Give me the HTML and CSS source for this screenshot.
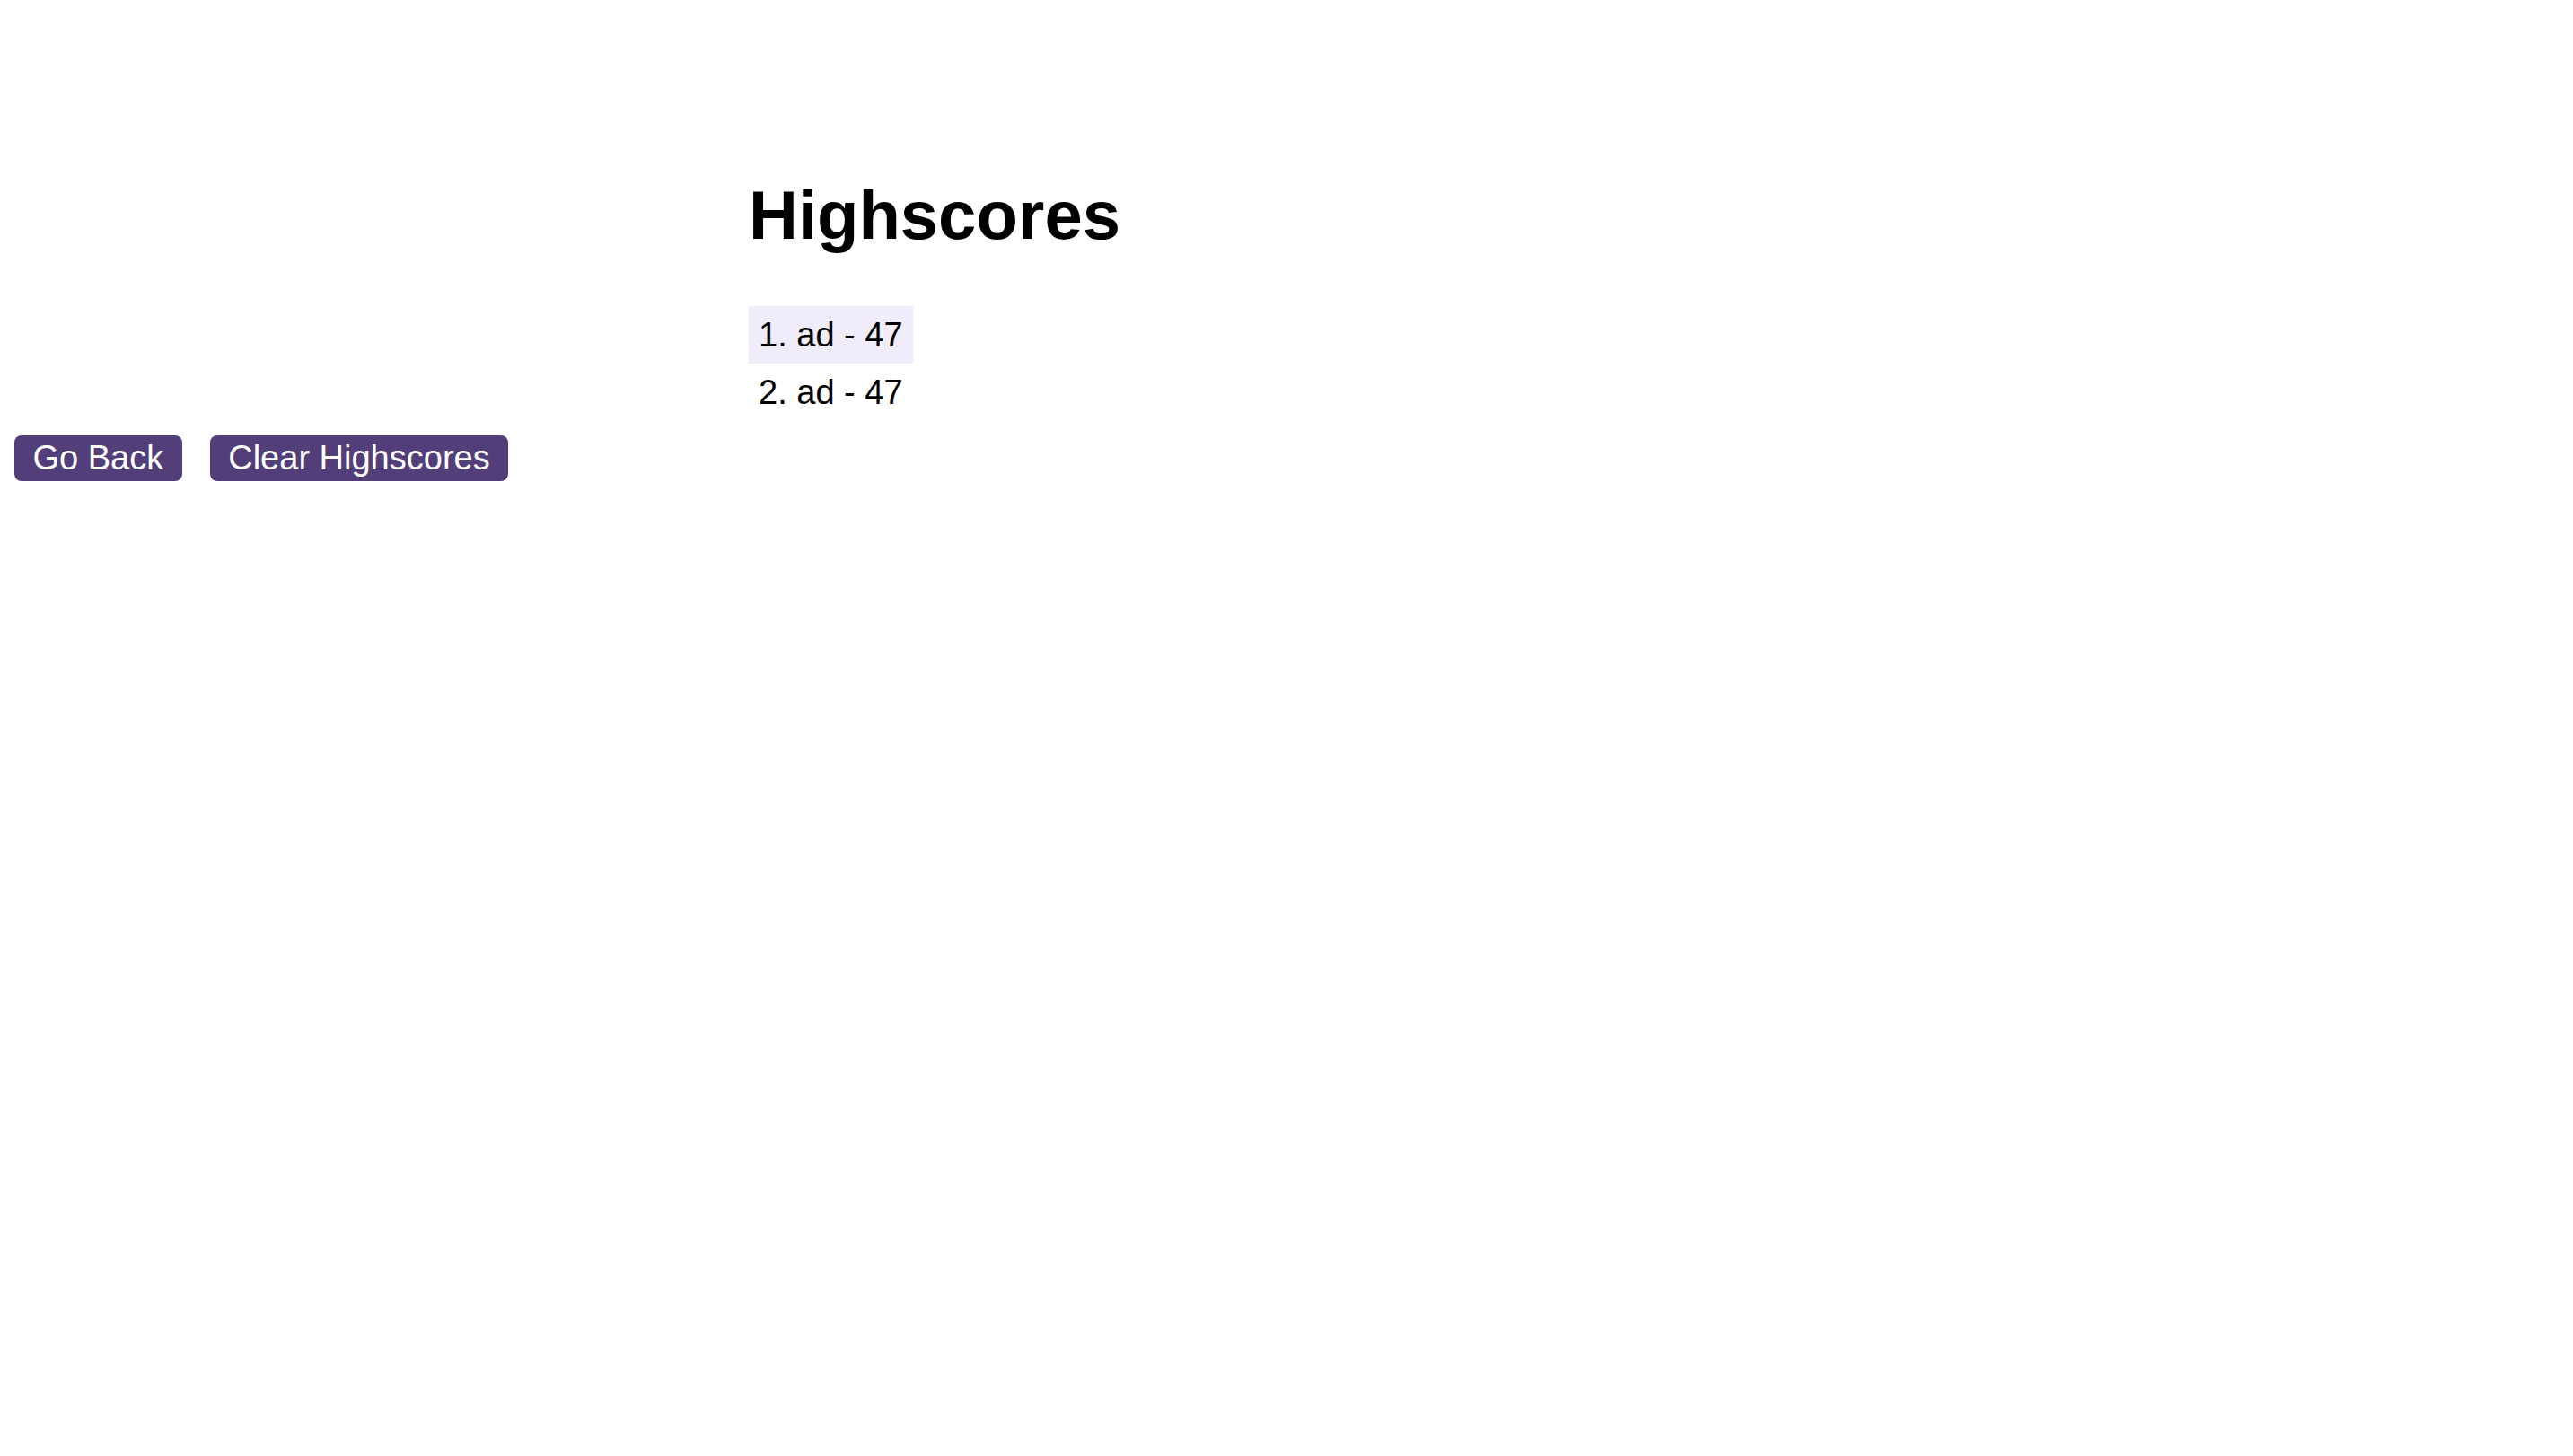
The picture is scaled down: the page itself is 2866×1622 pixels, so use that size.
FILE: index.html
```html
<!DOCTYPE html>
<html>
<head>
<meta charset="utf-8">
<title>Highscores</title>
<link rel="stylesheet" href="styles.css">
</head>
<body>
<div class="scores">
  <h1 class="title">Highscores</h1>
  <ul class="list">
    <li class="item item-hl">1. ad - 47</li>
    <li class="item">2. ad - 47</li>
  </ul>
</div>
<div class="actions">
  <button class="btn">Go Back</button>
  <button class="btn">Clear Highscores</button>
</div>
</body>
</html>
```
FILE: styles.css
```css
body {
  margin: 16px;
  font-family: "Liberation Sans", Arial, sans-serif;
  color: #000;
  background: #fff;
}
.scores {
  margin-left: 818px;
  padding-top: 180px;
}
.title {
  margin: 0;
  font-size: 76px;
  font-weight: bold;
  line-height: 1.15;
}
.list {
  list-style: none;
  margin: 58px 0 0 0;
  padding: 0;
  width: fit-content;
}
.item {
  font-size: 38px;
  line-height: 64px;
  padding: 0 11px;
}
.item-hl {
  background: #f0ecfa;
}
.actions {
  display: flex;
  gap: 31px;
  margin-top: 16px;
}
.btn {
  font-family: "Liberation Sans", Arial, sans-serif;
  font-size: 38px;
  line-height: 51px;
  height: 51px;
  padding: 0 20.5px;
  border: none;
  border-radius: 8px;
  background: #523f7a;
  color: #fff;
}
```
